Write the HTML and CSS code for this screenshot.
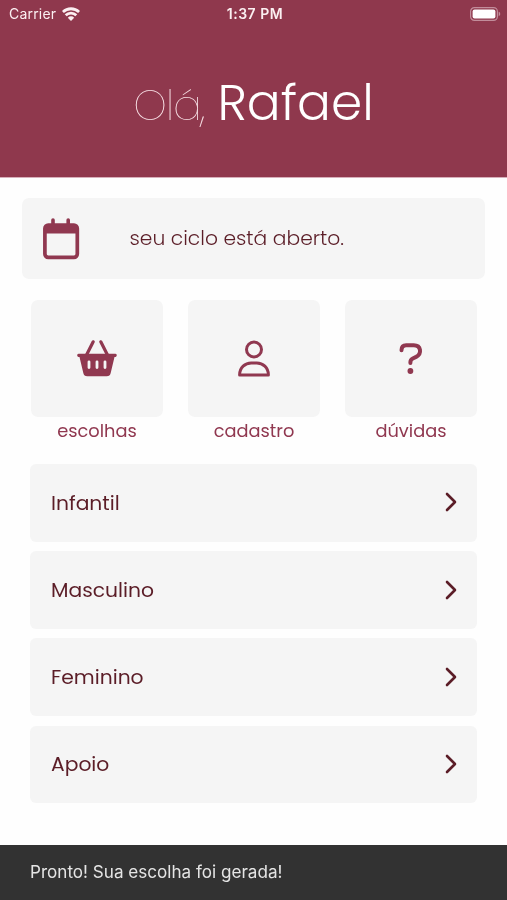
FILE: index.html
```html
<!DOCTYPE html>
<html lang="pt-BR">
<head>
<meta charset="utf-8">
<meta name="viewport" content="width=device-width, initial-scale=1">
<title>Início</title>
<link rel="stylesheet" href="styles.css">
</head>
<body>
<div class="screen">
  <header class="header">
    <div class="status">
      <div class="carrier"><span class="carrier-name">Carrier</span>
        <svg width="18" height="14" viewBox="0 0 18 14" fill="none" stroke="currentColor" stroke-width="2.8"><path d="M.9 5a11.700 11.700 0 0 1 16.200 0M3.700 8.200a7.700 7.700 0 0 1 10.600 0"/><path d="M9 13.900 5.800 10.700a4.400 4.400 0 0 1 6.400 0z" fill="currentColor" stroke="none"/></svg>
      </div>
      <div class="clock">1:37 PM</div>
      <svg class="battery" width="31" height="14" viewBox="0 0 31 14"><rect x=".6" y=".6" width="26.800" height="12.800" rx="3.800" fill="none" stroke="#c28d9b" stroke-width="1.200"/><rect x="2.600" y="2.600" width="22.800" height="8.800" rx="2" fill="#fff"/><path d="M28.700 4.800c2 .5 2 3.900 0 4.400z" fill="#c28d9b"/></svg>
    </div>
    <h1 class="greeting"><span class="hello">Olá,</span><span class="name">Rafael</span></h1>
  </header>
  <main class="content">
    <section class="cycle">
      <svg width="38" height="42" viewBox="0 0 38 42"><path d="M11 2v6M26.200 2v6" stroke="#903850" stroke-width="3.600" stroke-linecap="round"/><rect x="2.900" y="7.100" width="32.400" height="32.300" rx="3.300" fill="none" stroke="#903850" stroke-width="3.700"/><path d="M2.300 8h33.600v7.500H2.300z" fill="#903850"/></svg>
      <p class="cycle-text">seu ciclo está aberto.</p>
    </section>
    <nav class="tiles">
      <a class="tile"><span class="tile-box">
        <svg width="42" height="38" viewBox="0 0 42 38"><path d="M10.500 16 17.200 2.800M31.500 16 24.800 2.800" stroke="#903850" stroke-width="3.200" stroke-linecap="round"/><path d="M2.500 14.800h37c1.700 0 1.700 3 0 3.200h-1l-3.800 16c-.6 2.300-1.600 3.200-4 3.200H11.300c-2.400 0-3.400-.9-4-3.200L3.500 18h-1c-1.700-.2-1.700-3.200 0-3.200z" fill="#903850"/><path d="M13 22.800v5.800M21 22.800v5.800M29 22.800v5.800" stroke="#f5f5f5" stroke-width="2.800" stroke-linecap="round"/></svg>
      </span><span class="tile-label">escolhas</span></a>
      <a class="tile"><span class="tile-box">
        <svg width="34" height="38" viewBox="0 0 34 38" fill="none" stroke="#903850" stroke-width="3"><circle cx="17" cy="10.500" r="7.500"/><path d="M2.600 36c0-7.500 5.600-12 11.600-12h5.600c6 0 11.600 4.500 11.600 12z" stroke-linejoin="round"/></svg>
      </span><span class="tile-label">cadastro</span></a>
      <a class="tile"><span class="tile-box">
        <svg width="26" height="38" viewBox="0 0 26 38"><path d="M3.500 11.200C3.500 8.100 5.300 6.200 8.200 6.200h7.500c7.500 0 8.400 8.600 2.400 11.700l-3.300 1.600c-1.700.9-2.400 2-2.400 3.800v.6" fill="none" stroke="#903850" stroke-width="4" stroke-linecap="round"/><circle cx="12.400" cy="32" r="2.900" fill="#903850"/></svg>
      </span><span class="tile-label">dúvidas</span></a>
    </nav>
    <ul class="list">
      <li class="row"><span>Infantil</span><svg class="chevron" width="12" height="20" viewBox="0 0 12 20"><path d="m2 2 8 8-8 8"/></svg></li>
      <li class="row"><span>Masculino</span><svg class="chevron" width="12" height="20" viewBox="0 0 12 20"><path d="m2 2 8 8-8 8"/></svg></li>
      <li class="row"><span>Feminino</span><svg class="chevron" width="12" height="20" viewBox="0 0 12 20"><path d="m2 2 8 8-8 8"/></svg></li>
      <li class="row"><span>Apoio</span><svg class="chevron" width="12" height="20" viewBox="0 0 12 20"><path d="m2 2 8 8-8 8"/></svg></li>
    </ul>
  </main>
  <footer class="snackbar"><span class="message">Pronto! Sua escolha foi gerada!</span></footer>
</div>
</body>
</html>
```
FILE: styles.css
```css
* { box-sizing: border-box; }
body { margin: 0; background: #fefefe; font-family: Poppins, Inter, sans-serif; color: #5b1d27; }
.screen { height: 900px; display: flex; flex-direction: column; overflow: hidden; will-change: transform; }
.header { height: 178px; flex: none; background: #8f384d; border-bottom: 1px solid #d7afba; color: #fff; }
.status { height: 27px; display: grid; grid-template-columns: 1fr auto 1fr; align-items: center; padding: 0 6px 0 9px; font-family: Inter, sans-serif; font-size: 14px; color: #fbeff1; }
.carrier { display: flex; align-items: center; gap: 6px; }
.carrier-name { letter-spacing: .2px; }
.clock { font-weight: 600; font-size: 14px; letter-spacing: .5px; }
.battery { justify-self: end; }
.greeting { margin: 0; height: 149px; display: flex; justify-content: center; align-items: baseline; gap: 13px; padding-top: 44px; line-height: 63px; white-space: nowrap; }
.hello { font-size: 42.500px; font-weight: 200; color: #fae4e9; letter-spacing: -1px; }
.name { font-size: 50.200px; font-weight: 300; }
.content { flex: 1; padding: 20px 22px 0; }
.cycle { height: 81px; display: flex; align-items: center; border-radius: 7px; background: #f5f5f5; padding-left: 20px; gap: 49.500px; }
.cycle-text { margin: 0; font-size: 20.250px; font-weight: 300; line-height: 30px; padding-bottom: 2px; }
.tiles { display: grid; grid-template-columns: repeat(3, 132px); justify-content: space-between; margin: 21px 8px 0 9px; }
.tile { text-align: center; }
.tile-box { height: 117px; display: flex; align-items: center; justify-content: center; background: #f5f5f5; border-radius: 7px; padding-bottom: 1px; }
.tile-label { display: block; height: 47px; font-size: 17.800px; line-height: 28px; color: #903850; }
.list { list-style: none; margin: 0 8px; padding: 0; display: grid; gap: 9.500px; }
.row { height: 77.700px; display: flex; align-items: center; justify-content: space-between; padding: 0 20px 0 21px; background: #f5f5f5; border-radius: 6px; font-size: 20.300px; }
.chevron { fill: none; stroke: #5b1d27; stroke-width: 2.600; stroke-linecap: round; stroke-linejoin: round; margin-bottom: 1px; }
.snackbar { height: 55px; flex: none; background: #323232; color: #e5e5e5; display: flex; align-items: center; padding: 0 0 2px 30px; font-family: Inter, sans-serif; font-size: 17.100px; }
```
